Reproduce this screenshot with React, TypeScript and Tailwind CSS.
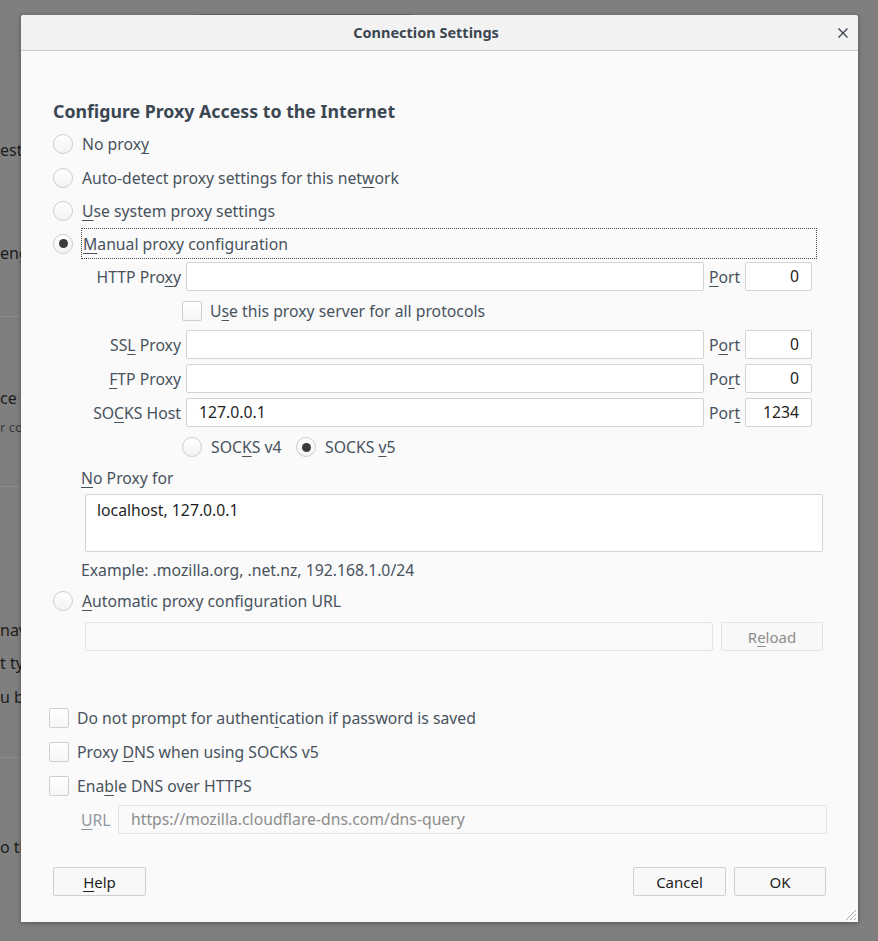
import React from "react";

// подчёркнутая буква быстрого доступа
const U = ({ children }: { children: React.ReactNode }) => (
  <span className="underline underline-offset-[3px] decoration-1">{children}</span>
);

const Radio = ({ checked = false }: { checked?: boolean }) => (
  <span className="w-[20px] h-[20px] shrink-0 rounded-full border border-[#cdcdcd] bg-gradient-to-b from-white to-[#f3f3f3] flex items-center justify-center">
    {checked && <span className="w-[9px] h-[9px] rounded-full bg-[#3b3b3b]" />}
  </span>
);

const Checkbox = () => (
  <span className="w-[20px] h-[20px] shrink-0 rounded-[2px] border border-[#cfcfcf] bg-gradient-to-b from-white to-[#f6f6f6]" />
);

const Field = ({
  width,
  value,
  right = false,
  disabled = false,
  height = "h-[29px]",
}: {
  width: string;
  value?: string;
  right?: boolean;
  disabled?: boolean;
  height?: string;
}) => (
  <div
    className={`${width} ${height} shrink-0 rounded-[2px] border flex px-[12px] pt-[1px] text-[15.75px] ${
      disabled ? "bg-[#fafafa] border-[#e2e2e2] text-[#8c8c8c]" : "bg-white border-[#d3d3d3] text-[#1f1f1f]"
    } ${right ? "justify-end items-center" : "items-center"}`}
  >
    {value}
  </div>
);

const ProxyRow = ({
  label,
  port,
  portValue,
  value,
}: {
  label: React.ReactNode;
  port: React.ReactNode;
  portValue: string;
  value?: string;
}) => (
  <div className="flex items-center h-[29px] ml-[33px]">
    <div className="w-[100px] text-right pr-[1px] pt-[2px] whitespace-nowrap">{label}</div>
    <div className="w-[4px]" />
    <Field width="w-[518px]" value={value} />
    <div className="w-[34px] ml-[5px] mr-[2px] pt-[2px]">{port}</div>
    <Field width="w-[67px]" value={portValue} right />
  </div>
);

const Button = ({
  children,
  width,
  disabled = false,
}: {
  children: React.ReactNode;
  width: string;
  disabled?: boolean;
}) => (
  <div
    className={`${width} h-[29px] shrink-0 rounded-[2px] border flex items-center justify-center pt-[1px] text-[15px] ${
      disabled ? "bg-[#f8f8f8] border-[#e3e3e3] text-[#8d8d8d]" : "bg-[#f8f8f8] border-[#cfcfcf] text-[#1e1e1e]"
    }`}
  >
    {children}
  </div>
);

// обрезки текста страницы под диалогом
const Peek = ({ text, mt, small = false }: { text: string; mt: string; small?: boolean }) => (
  <div
    className={`${mt} w-[21px] overflow-hidden whitespace-nowrap ${
      small ? "h-[18px] text-[13px] leading-[18px] text-[#3a3a3a]" : "h-[20px] text-[16px] leading-[20px] text-[#1c1c1c]"
    }`}
  >
    {text}
  </div>
);

export default function App() {
  return (
    <div className="w-[878px] h-[941px] bg-[#7f7f7f] flex overflow-hidden font-['Noto_Sans',sans-serif] text-[#47525d]">
      {/* левая полоска фона */}
      <div className="w-[21px] shrink-0 flex flex-col">
        <Peek text="est" mt="mt-[140px]" />
        <Peek text="eng" mt="mt-[83px]" />
        <div className="mt-[53px] h-px bg-[#8c8c8c]" />
        <Peek text="ce s" mt="mt-[71px]" />
        <Peek text="r co" mt="mt-[10px]" small />
        <div className="mt-[50px] h-px bg-[#8c8c8c]" />
        <Peek text="nav" mt="mt-[133px]" />
        <Peek text="t ty" mt="mt-[13px]" />
        <Peek text="u br" mt="mt-[14px]" />
        <div className="mt-[50px] h-px bg-[#8c8c8c]" />
        <Peek text="o th" mt="mt-[79px]" />
      </div>

      <div className="flex flex-col">
        <div className="h-[15px] shrink-0">
          <div className="ml-[178px] mt-[14px] w-[212px] h-px bg-[#686868]" />
        </div>

        {/* диалог */}
        <div className="w-[837px] h-[907px] bg-[#fafafa] rounded-t-[3px] shadow-[0_1px_5px_rgba(0,0,0,0.35)] flex flex-col relative">
          <div className="h-[36px] shrink-0 bg-[#f2f2f2] border-b border-[#c9c9c9] rounded-t-[3px] flex items-center relative">
            <div className="flex-1 text-center text-[14.5px] font-bold text-[#3c4650] pr-[27px]">Connection Settings</div>
            <svg className="absolute right-[10px] top-[13px]" width="10" height="10" viewBox="0 0 10 10">
              <path d="M0.5 0.5 L9.5 9.5 M9.5 0.5 L0.5 9.5" stroke="#3c4650" strokeWidth="1.4" />
            </svg>
          </div>

          <div className="flex flex-col pl-[28px] text-[15.75px]">
            <div className="h-[24px] mt-[48px] ml-[4px] flex items-center text-[17.75px] font-bold text-[#3b4753]">
              Configure Proxy Access to the Internet
            </div>

            <div className="h-[34px] mt-[4px] ml-[4px] flex items-center gap-[9px]">
              <Radio />
              <span className="pt-[2px]">
                No prox<U>y</U>
              </span>
            </div>
            <div className="h-[33px] ml-[4px] flex items-center gap-[9px]">
              <Radio />
              <span className="pt-[2px]">
                Auto-detect proxy settings for this net<U>w</U>ork
              </span>
            </div>
            <div className="h-[34px] ml-[4px] flex items-center gap-[9px]">
              <Radio />
              <span className="pt-[2px]">
                <U>U</U>se system proxy settings
              </span>
            </div>
            <div className="h-[31px] ml-[4px] flex items-center gap-[8px]">
              <Radio checked />
              <div className="w-[736px] h-[31px] border border-dotted border-[#4a4a4a] flex items-center pl-[1px]">
                <span className="pt-[2px]">
                  <U>M</U>anual proxy configuration
                </span>
              </div>
            </div>

            <div className="h-[3px]" />
            <ProxyRow
              label={
                <>
                  HTTP Pro<U>x</U>y
                </>
              }
              port={
                <>
                  <U>P</U>ort
                </>
              }
              portValue="0"
            />
            <div className="h-[39px] ml-[133px] flex items-center gap-[8px]">
              <Checkbox />
              <span className="pt-[2px]">
                U<U>s</U>e this proxy server for all protocols
              </span>
            </div>
            <ProxyRow
              label={
                <>
                  SS<U>L</U> Proxy
                </>
              }
              port={
                <>
                  P<U>o</U>rt
                </>
              }
              portValue="0"
            />
            <div className="h-[5px]" />
            <ProxyRow
              label={
                <>
                  <U>F</U>TP Proxy
                </>
              }
              port={
                <>
                  Po<U>r</U>t
                </>
              }
              portValue="0"
            />
            <div className="h-[5px]" />
            <ProxyRow
              label={
                <>
                  SO<U>C</U>KS Host
                </>
              }
              port={
                <>
                  Por<U>t</U>
                </>
              }
              value="127.0.0.1"
              portValue="1234"
            />
            <div className="h-[40px] ml-[133px] flex items-center">
              <Radio />
              <span className="ml-[9px] w-[73px] pt-[2px]">
                SOC<U>K</U>S v4
              </span>
              <span className="ml-[12px]">
                <Radio checked />
              </span>
              <span className="ml-[9px] pt-[2px]">
                SOCKS <U>v</U>5
              </span>
            </div>

            <div className="h-[22px] ml-[32px] flex items-center">
              <span className="pt-[2px]">
                <U>N</U>o Proxy for
              </span>
            </div>
            <div className="mt-[5px] ml-[36px] w-[738px] h-[58px] bg-white border border-[#d3d3d3] rounded-[2px] px-[11px] pt-[4px] text-[#1f1f1f]">
              localhost, 127.0.0.1
            </div>
            <div className="h-[36px] ml-[32px] pt-[2px] flex items-center">Example: .mozilla.org, .net.nz, 192.168.1.0/24</div>
            <div className="h-[26px] ml-[4px] flex items-center gap-[9px]">
              <Radio />
              <span className="pt-[2px]">
                <U>A</U>utomatic proxy configuration URL
              </span>
            </div>
            <div className="mt-[8px] ml-[36px] flex items-center gap-[8px]">
              <Field width="w-[628px]" disabled />
              <Button width="w-[102px]" disabled>
                <span>
                  R<U>e</U>load
                </span>
              </Button>
            </div>

            <div className="h-[34px] mt-[50px] flex items-center gap-[8px]">
              <Checkbox />
              <span className="pt-[2px]">
                Do not prompt for authent<U>i</U>cation if password is saved
              </span>
            </div>
            <div className="h-[34px] flex items-center gap-[8px]">
              <Checkbox />
              <span className="pt-[2px]">
                Proxy <U>D</U>NS when using SOCKS v5
              </span>
            </div>
            <div className="h-[34px] flex items-center gap-[8px]">
              <Checkbox />
              <span className="pt-[2px]">
                Ena<U>b</U>le DNS over HTTPS
              </span>
            </div>
            <div className="mt-[2px] ml-[32px] flex items-center">
              <span className="w-[37px] pt-[2px] text-[#8f979e]">
                <U>U</U>RL
              </span>
              <Field width="w-[709px]" value="https://mozilla.cloudflare-dns.com/dns-query" disabled />
            </div>

            <div className="mt-[33px] ml-[4px] flex items-center">
              <Button width="w-[93px]">
                <span>
                  <U>H</U>elp
                </span>
              </Button>
              <div className="flex-1" />
              <Button width="w-[93px]">Cancel</Button>
              <div className="w-[8px]" />
              <Button width="w-[92px]">OK</Button>
              <div className="w-[32px]" />
            </div>
          </div>

          {/* уголок изменения размера */}
          <svg className="absolute right-[1px] bottom-[1px]" width="14" height="14" viewBox="0 0 14 14">
            <path d="M13 3 L3 13 M13 7 L7 13 M13 11 L11 13" stroke="#a8a8a8" strokeWidth="1" />
          </svg>
        </div>
      </div>
    </div>
  );
}
